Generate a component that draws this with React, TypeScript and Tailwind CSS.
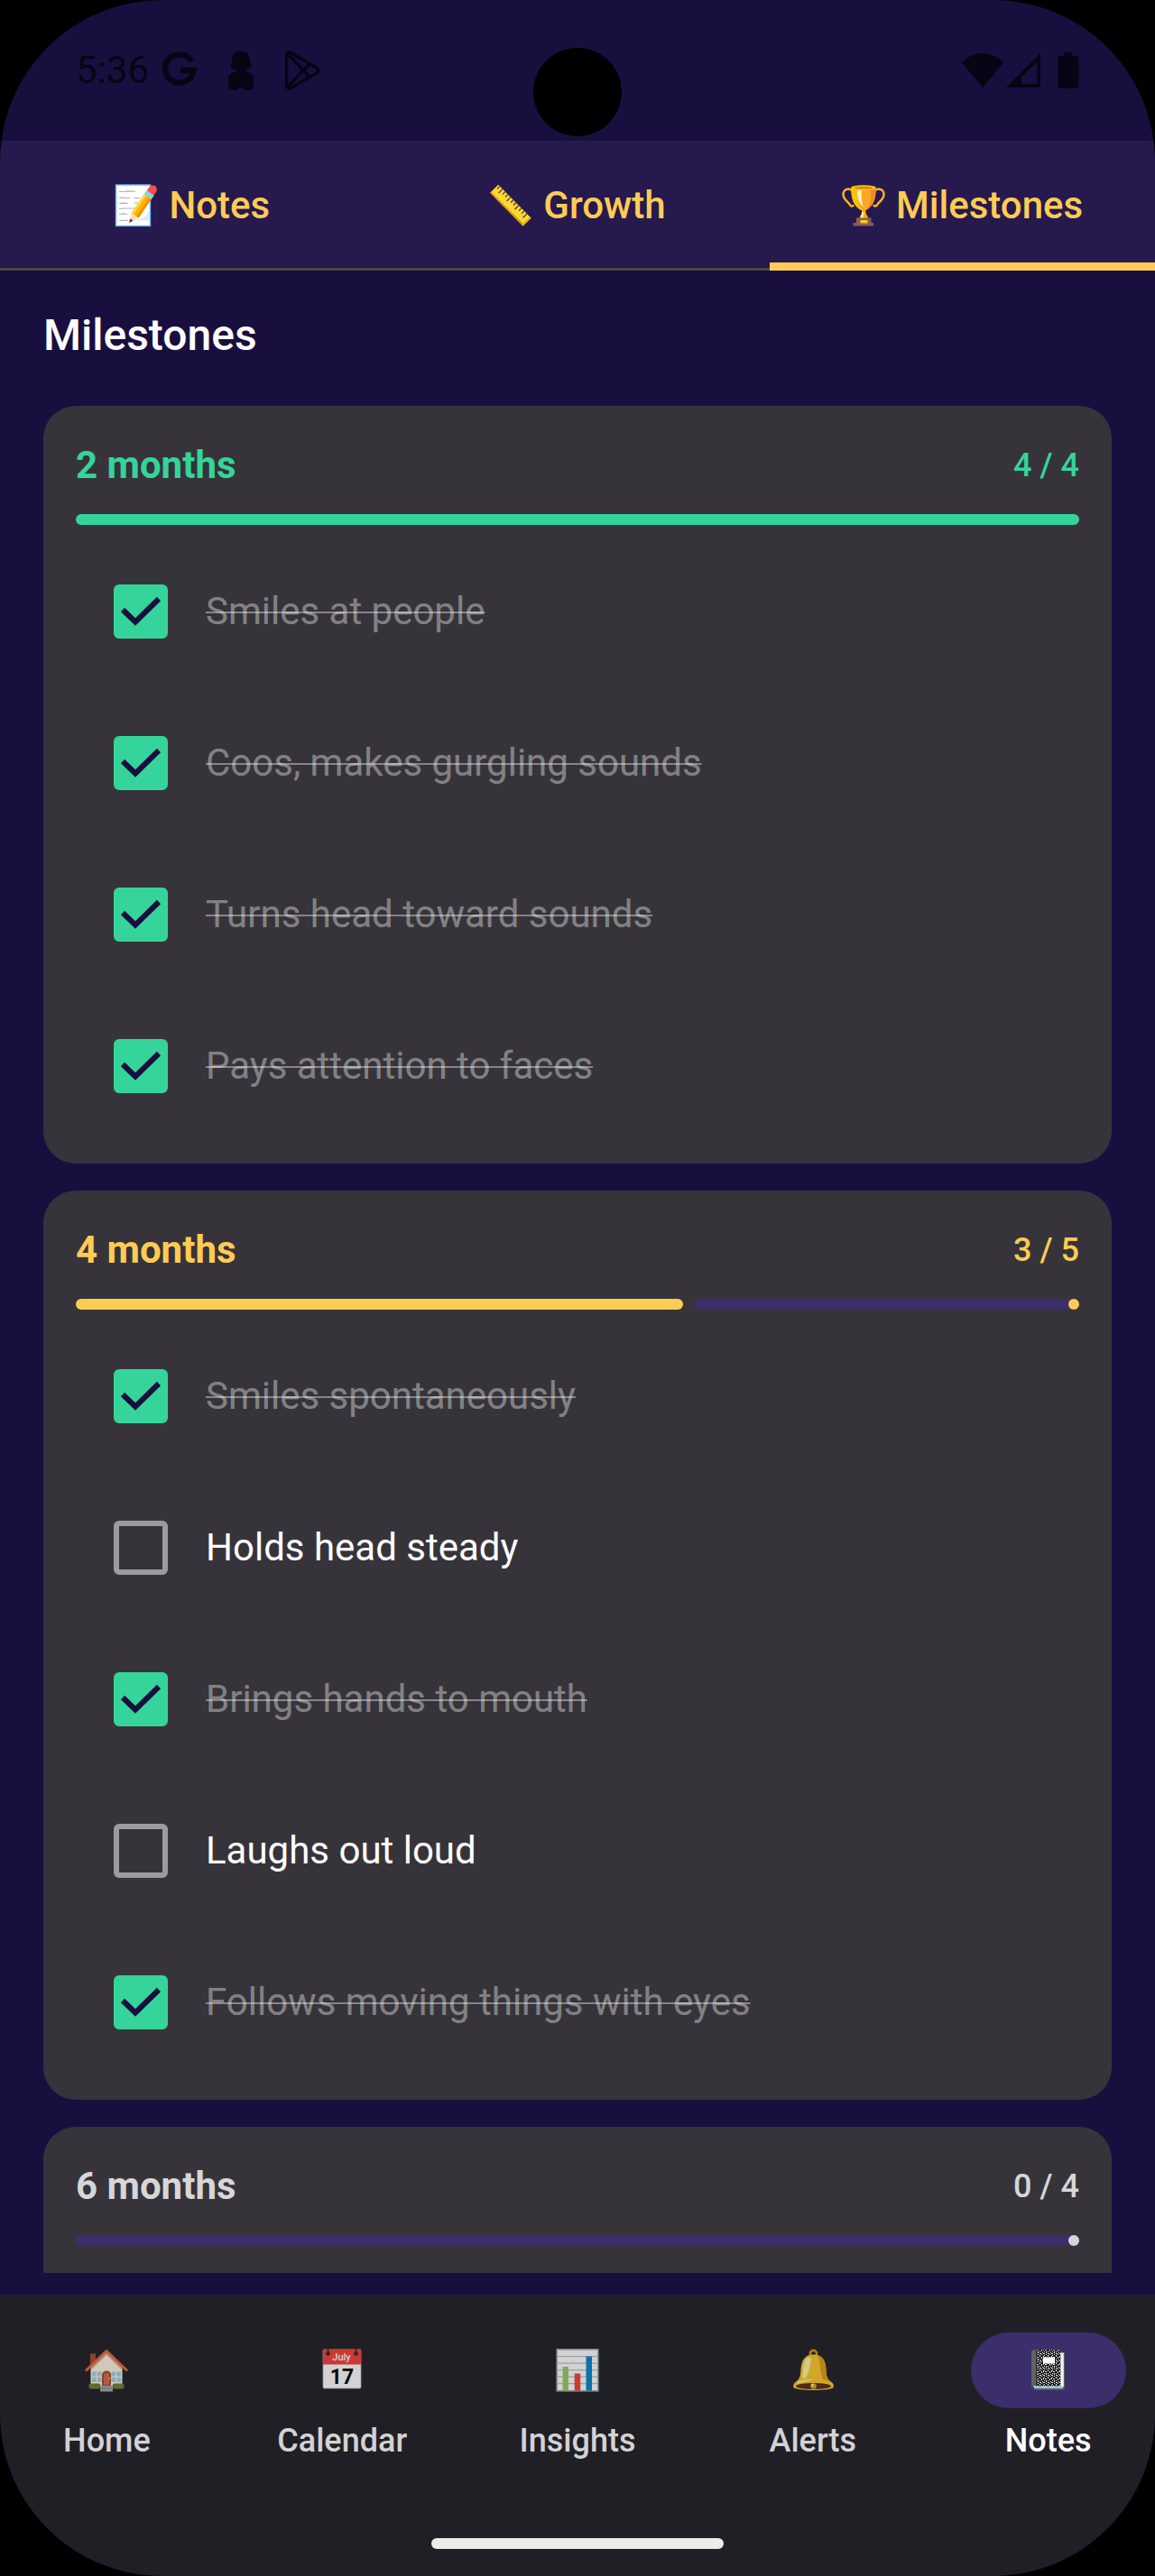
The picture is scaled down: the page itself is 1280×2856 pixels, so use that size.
import React, { useState } from "react";
import clsx from "clsx";

type Milestone = { label: string; done: boolean };
type Group = { title: string; total: number; items: Milestone[] };

const initialGroups: Group[] = [
  {
    title: "2 months",
    total: 4,
    items: [
      { label: "Smiles at people", done: true },
      { label: "Coos, makes gurgling sounds", done: true },
      { label: "Turns head toward sounds", done: true },
      { label: "Pays attention to faces", done: true },
    ],
  },
  {
    title: "4 months",
    total: 5,
    items: [
      { label: "Smiles spontaneously", done: true },
      { label: "Holds head steady", done: false },
      { label: "Brings hands to mouth", done: true },
      { label: "Laughs out loud", done: false },
      { label: "Follows moving things with eyes", done: true },
    ],
  },
  { title: "6 months", total: 4, items: [] },
];

const MemoIcon = () => (
  <svg viewBox="0 0 48 48" className="size-12">
    <rect x="1.5" y="1" width="38" height="45.5" fill="#fff" stroke="#6db8ea" strokeWidth="1.4" />
    <path d="M39 24c0 9-5 14-17 17l17-1z" fill="#d6ebf8" />
    <path
      d="M5 8.5h7l2-.6 9 .3M5 15.5l4-.5 4 .8 4-.6M22 15.5h6M5 21.5l5-.4 5 .4M22 21h4M5 27.5l8-.5h12M5 33.5l5-.6 4 .6M5 40.5h6l4-.5"
      fill="none"
      stroke="#a3b3bb"
      strokeWidth="1.1"
    />
    <path d="M41.8 6.6 39.5 10" stroke="#ef5350" strokeWidth="9.5" />
    <circle cx="42.3" cy="6" r="4.6" fill="#ef5350" />
    <path d="m39.6 9.8-3.3 4.8" stroke="#8fd0e0" strokeWidth="10" />
    <path d="M36.6 14.2 22.5 35" stroke="#ffb300" strokeWidth="9.5" />
    <path d="M33.8 12.3 19.8 33" stroke="#ffd54f" strokeWidth="2.6" />
    <path d="M39.3 16.2 25.5 36.6" stroke="#f28c00" strokeWidth="2.8" />
    <path d="m18.5 32.3 8 5.4-10.2 4.9z" fill="#ffe0a3" />
    <path d="m17.2 38.3 3.4 2.4-4.6 2.3z" fill="#4a4a4a" />
  </svg>
);

const RulerIcon = () => (
  <svg viewBox="0 0 48 48" className="size-12">
    <path d="m10.3.8-9.2 9L37.5 46.6l9.1-8.8z" fill="#fdd835" />
    <path d="M1.1 9.8 37.5 46.6l1.4-1.5L2.3 8.7z" fill="#d99a00" />
    <path d="m37.5 46.6 9.1-8.8-1.4-1.3-8.9 8.8z" fill="#e8ac10" />
    <path
      d="m12 2.5-3 3m6 0-4.5 4.5M18 8.5l-3 3m6 0-3 3m6 0-4.5 4.5M27 17.6l-3 3m6 0-3 3m6 0-4.5 4.5M36 26.8l-3 3m6 0-3 3m6.2 0-4.7 4.7"
      fill="none"
      stroke="#6d4c2a"
      strokeWidth="1.5"
    />
  </svg>
);

const TrophyIcon = () => (
  <svg viewBox="0 0 48 48" className="size-12">
    <path
      d="M12 8C8 3.5 1.5 5.5 1.5 11.5S7 19.5 8.5 22.5c1 2 2.5 2.5 4 1.5M36 8c4-4.5 10.5-2.5 10.5 3.5S41 19.5 39.5 22.5c-1 2-2.5 2.5-4 1.5"
      fill="none"
      stroke="#ffb81c"
      strokeWidth="2.4"
      strokeLinecap="round"
    />
    <path d="M10.5 3.5h27c.8 12-2.5 20.5-10.5 25.5h-6C13 24 9.7 15.5 10.5 3.5z" fill="#ffa726" />
    <path d="M10.5 4H17c-.8 10 .5 18.500 5 25h-1C13 24 9.700 16 10.500 4z" fill="#ffc107" />
    <path d="M17 6.5h5c-.8 7 0 13 1.5 18.5-4.8-4-6.800-10-6.500-18.500z" fill="#fff3b0" />
    <path d="M32 6h5.5c.2 11-3 18.5-9.5 22 3.5-6 4.5-13 4-22z" fill="#f28c1a" />
    <ellipse cx="24" cy="3.8" rx="13.5" ry="2.6" fill="#ffc928" />
    <ellipse cx="24" cy="4.2" rx="10.5" ry="1.4" fill="#d98500" />
    <path d="M22 28h4l.8 5 3 5.5h-11l3-5.5z" fill="#ffb300" />
    <path d="M22.5 31H24l-.5 7h-3z" fill="#fff3b0" />
    <path d="M16 37.5h16.500V43H35v3.500H12.500V43H16z" fill="#8d5f4c" />
    <rect x="20.5" y="40" width="8" height="3.5" fill="#ffc928" />
  </svg>
);

const HouseIcon = () => (
  <svg viewBox="0 0 48 48" className="size-12">
    <rect x="6" y="5.5" width="6" height="15" fill="#a1512a" />
    <path d="M6.5 22.5 24 5l17.5 17.5V43h-35z" fill="#fff3e0" />
    <path d="M8 22.5 24 7l16 15.5 1.5 1V20L24 3 6.5 20v3z" fill="#c9b09c" />
    <path d="m1 24.5 23-22 23 22" fill="none" stroke="#f4662d" strokeWidth="2.8" />
    <path d="M8 25.5h10.5V37H8zM29.5 25.5H40V37H29.500z" fill="#9fd5df" />
    <path d="M13.2 25v12.5M8 31.2h10.5M34.8 25v12.5M29.5 31.2H40" stroke="#fff3e0" strokeWidth="1.2" />
    <path d="M19 41V29c0-6 10-6 10 0v12z" fill="#a8482c" />
    <path d="M21 40V29c0-3.5 6-3.5 6 0v11z" fill="#cf6f50" />
    <circle cx="27.5" cy="33" r="1" fill="#fdd835" />
    <rect x="4.5" y="38.5" width="13" height="6" rx="2.5" fill="#727f32" />
    <rect x="30.5" y="38.5" width="13" height="6" rx="2.5" fill="#727f32" />
    <path d="M17 41h14v6.5H17z" fill="#a5a8aa" />
    <path d="M17 43.8h14" stroke="#83878a" strokeWidth="1" />
  </svg>
);

const CalendarIcon = () => (
  <svg viewBox="0 0 48 48" className="size-12">
    <rect x="3" y="1" width="42" height="43" rx="1.5" fill="#fff" stroke="#b0b0b5" strokeWidth=".8" />
    <path d="M3 1.5Q3 .5 4 .5h40q1 0 1 1v16H3z" fill="#f44336" />
    <path d="M8.5 0v5M39.5 0v5" stroke="#3b2523" strokeWidth="1.8" />
    <circle cx="8.5" cy="5.5" r="2.3" fill="#3b2523" />
    <circle cx="39.5" cy="5.5" r="2.3" fill="#3b2523" />
    <text x="23.5" y="13" textAnchor="middle" fontSize="11" fontWeight="500" fill="#fff">
      July
    </text>
    <text x="24" y="39" textAnchor="middle" fontSize="23" fontWeight="700" fill="#000">
      17
    </text>
  </svg>
);

const ChartIcon = () => (
  <svg viewBox="0 0 48 48" className="size-12">
    <rect x="1.2" y=".8" width="45.6" height="46" fill="#fff" stroke="#9eabb2" strokeWidth="1.6" />
    <path d="M1 8.7h46M1 16.2h46M1 23.7h46M1 31.2h46M1 38.7h46" stroke="#b9bfc4" strokeWidth="1.2" />
    <path d="M7.5 20H14v26.5H7.5z" fill="#9ccc65" />
    <path d="M20.7 27.5h6.5v19h-6.5z" fill="#f44336" />
    <path d="M33.5 8.5H40v38h-6.5z" fill="#0288d1" />
  </svg>
);

const BellIcon = () => (
  <svg viewBox="0 0 48 48" className="size-12">
    <circle cx="24.5" cy="5.5" r="3.6" fill="none" stroke="#d6960f" strokeWidth="2.6" />
    <path d="M24.5 6.5c9.5 0 13.5 6 14 17 .4 9 2 10.5 6 13.5 2 1.5 3 4 2 6-3 4-40.5 4-44 0-1-2 0-4.5 2-6 4-3 5.4-4.5 6-13.5.7-11 4.5-17 14-17z" fill="#fdca2a" />
    <path d="M29 7.5c7 1.5 9.2 8 9.5 16 .3 8 1.5 10.5 5 13l-8-2C31 27 33 14 29 7.5z" fill="#e09f12" />
    <path d="M18 10c3.5-1 4.5 0 3.8 3-1 5-2 13-5.5 18.5-1.5 2-4.5 2-4-1C13.5 24 12.5 13 18 10z" fill="#fff59d" />
    <path d="M9 36c6-2 12-2 16-1.5-6 1-12 2-18 4-1.5 0-.5-1.5 2-2.5z" fill="#fff59d" />
    <ellipse cx="24.5" cy="41.5" rx="19.5" ry="3.6" fill="#5d2f16" />
    <circle cx="24.5" cy="41.5" r="3.3" fill="#e0a21b" />
    <circle cx="23.5" cy="40.5" r="1.4" fill="#fff3a0" />
  </svg>
);

const NotebookIcon = () => (
  <svg viewBox="0 0 48 48" className="size-12">
    <defs>
      <pattern id="speckle" width="9" height="8" patternUnits="userSpaceOnUse">
        <rect width="9" height="8" fill="#1c1c1c" />
        <path
          d="M0 0h1v2H0zM2 1h2v1H2zM5 0h1v1H5zM7 1h1v2H7zM1 3h1v1H1zM3 3h1v2H3zM5 3h1v1H5zM8 4h1v1H8zM0 5h2v1H0zM5 5h2v1H5zM3 6h1v1H3zM7 6h1v1H7zM1 7h1v1H1zM5 7h1v1H5z"
          fill="#ececec"
        />
      </pattern>
    </defs>
    <path d="M8 4h34v40q0 2-2 2H8z" fill="#5b5b60" />
    <path d="M37 4.5h3.8V42L37 44z" fill="#f5f5f5" />
    <path d="M7 41h31l2 3H8z" fill="#90cfe0" />
    <path d="M5 3q0-1.5 1.5-1.5H37V41H7l-2 2z" fill="#636363" />
    <path d="M10.5 1.5v40" stroke="#333" strokeWidth="1" />
    <path d="M11.5 1.5h26v40h-26z" fill="url(#speckle)" />
    <rect x="18" y="9.5" width="13" height="7" fill="#fff" />
  </svg>
);

const tabs = [
  { label: "Notes", icon: <MemoIcon /> },
  { label: "Growth", icon: <RulerIcon /> },
  { label: "Milestones", icon: <TrophyIcon /> },
];

const navItems = [
  { label: "Home", icon: <HouseIcon /> },
  { label: "Calendar", icon: <CalendarIcon /> },
  { label: "Insights", icon: <ChartIcon /> },
  { label: "Alerts", icon: <BellIcon /> },
  { label: "Notes", icon: <NotebookIcon /> },
];

const StatusBar = () => {
  return (
    <div className="relative flex h-39 shrink-0 items-start justify-between px-21 pt-13 text-[#070414]">
      <div className="flex items-center">
        <span className="text-[42px] leading-[52px]">5:36</span>
        <svg viewBox="0 0 40 40" className="ml-3.5 size-10">
          <path d="M33.5 10A15.8 15.8 0 1 0 35.5 20H21" fill="none" stroke="currentColor" strokeWidth="6.5" />
        </svg>
        <svg viewBox="0 0 32 44" className="ml-8 h-11 w-8" fill="currentColor">
          <path d="M16 .5c6.5 0 9.500 4 10 9.500.2 3 .5 5 2 7.500-1.500 3-4 3.500-7 4V23c5 1.500 9 3.500 9 7v11c0 2-1.500 3-3.500 3h-5c-1.500 0-2.500-.8-3-2-.5-1.300-4.500-1.300-5 0-.5 1.200-1.500 2-3 2h-5C3.500 44 2 43 2 41V30c0-3.500 4-5.500 9-7v-1.500c-3-.5-5.500-1-7-4 1.500-2.500 1.800-4.500 2-7.500C6.500 4.500 9.500.5 16 .5z" />
        </svg>
        <svg viewBox="0 0 40 44" className="ml-8 h-11 w-10" fill="none" stroke="currentColor" strokeWidth="3.5" strokeLinejoin="round">
          <path d="M2.5 5.5c0-3 2.5-4.5 5-3L35 18.5c3.5 2 3.5 5 0 7l-27.500 16c-2.500 1.500-5 0-5-3z" />
          <path d="m3.5 3.5 25 26M3.5 40.5l25-26" />
        </svg>
      </div>
      <div className="flex h-13 items-center">
        <svg viewBox="0 0 46 40" className="h-10 w-[46px]" fill="currentColor">
          <path d="M23 39 0 11.5C13-2.5 33-2.500 46 11.500z" />
        </svg>
        <svg viewBox="0 0 40 40" className="ml-0.5 size-10">
          <path fill="currentColor" fillRule="evenodd" d="M39 1v38H1zM35.5 11 18 27.5V35h17.500z" />
        </svg>
        <svg viewBox="0 0 24 40" className="ml-4.5 h-10 w-6" fill="currentColor">
          <path d="M7.500 0h9v4H21q2.500 0 2.500 2.500v31Q23.500 40 21 40H3Q.5 40 .5 37.500v-31Q.5 4 3 4h4.500z" />
        </svg>
      </div>
      {/* camera cutout */}
      <div className="absolute top-[53px] left-1/2 size-[98px] -translate-x-1/2 rounded-full bg-black" />
    </div>
  );
};

const TabBar = () => {
  const [active, setActive] = useState("Milestones");
  return (
    <div role="tablist" className="grid h-36 shrink-0 grid-cols-3 bg-[#26194e]">
      {tabs.map((tab) => (
        <button
          key={tab.label}
          type="button"
          role="tab"
          aria-selected={active === tab.label}
          onClick={() => setActive(tab.label)}
          className="relative flex items-center justify-center gap-3 border-b-3 border-[#49464c] pt-[3px] text-[42px] leading-[60px] font-medium text-[#fecc54]"
        >
          {tab.icon}
          {tab.label}
          {active === tab.label && <span className="absolute inset-x-0 -bottom-[3px] h-[9px] bg-[#fecc54]" />}
        </button>
      ))}
    </div>
  );
};

const Progress = ({ value, total }: { value: number; total: number }) => {
  const full = value === total;
  return (
    <div
      role="progressbar"
      aria-valuenow={value}
      aria-valuemax={total}
      className="mt-6 flex h-3 gap-3"
    >
      {value > 0 && (
        <div
          className={clsx("rounded-full", full ? "bg-[#35d49b]" : "bg-[#fecc54]")}
          style={{ width: full ? "100%" : `calc(${(value / total) * 100}% + 6px)` }}
        />
      )}
      {!full && (
        <div className="flex flex-1 justify-end rounded-full bg-[#3b2e6b]">
          <span className={clsx("size-3 rounded-full", value > 0 ? "bg-[#fecc54]" : "bg-[#d8d5e1]")} />
        </div>
      )}
    </div>
  );
};

const MilestoneRow = ({ item, onToggle }: { item: Milestone; onToggle: () => void }) => {
  return (
    <label className="flex h-36 items-center">
      <span className="mx-[42px] grid">
        <input
          type="checkbox"
          checked={item.done}
          onChange={onToggle}
          className="col-start-1 row-start-1 size-15 appearance-none rounded-md border-6 border-[#9c9b9f] checked:border-[#35d49b] checked:bg-[#35d49b]"
        />
        {item.done && (
          <svg viewBox="0 0 60 60" className="pointer-events-none col-start-1 row-start-1 size-15">
            <path d="m10 28 14 13.5L50 16" fill="none" stroke="#190f3f" strokeWidth="6" />
          </svg>
        )}
      </span>
      <span
        className={clsx(
          "text-[42px] leading-[60px]",
          item.done ? "text-white/40 line-through decoration-2" : "text-white"
        )}
      >
        {item.label}
      </span>
    </label>
  );
};

const MilestoneCard = ({ group, onToggle }: { group: Group; onToggle: (label: string) => void }) => {
  const done = group.items.filter((item) => item.done).length;
  const color =
    done === group.total ? "text-[#35d49b]" : done > 0 ? "text-[#fecc54]" : "text-[#d7d6d8]";
  return (
    <section className="shrink-0 rounded-[36px] bg-[#36343a] p-9">
      <div className={clsx("flex items-center justify-between", color)}>
        <h2 className="text-[42px] leading-[60px] font-bold">{group.title}</h2>
        <span className="text-4xl leading-[48px] font-medium">
          {done} / {group.total}
        </span>
      </div>
      <Progress value={done} total={group.total} />
      <div className="mt-6 flex min-h-36 flex-col gap-6">
        {group.items.map((item) => (
          <MilestoneRow key={item.label} item={item} onToggle={() => onToggle(item.label)} />
        ))}
      </div>
    </section>
  );
};

const BottomNav = () => {
  return (
    <nav className="flex shrink-0 flex-col bg-[#211f26] pt-[42px]">
      <div className="grid grid-cols-5 gap-6">
        {navItems.map((item, i) => {
          const active = i === 4;
          return (
            <button key={item.label} type="button" className="flex flex-col items-center gap-3">
              <span
                className={clsx(
                  "flex h-21 w-43 items-center justify-center rounded-full",
                  active && "bg-[#3b2e6b]"
                )}
              >
                <span className={active ? "opacity-100" : "opacity-80"}>{item.icon}</span>
              </span>
              <span
                className={clsx(
                  "text-4xl leading-[48px] font-medium",
                  active ? "text-white" : "text-[#d3d2d4]"
                )}
              >
                {item.label}
              </span>
            </button>
          );
        })}
      </div>
      <div className="mx-auto mt-21 mb-[30px] h-3 w-81 rounded-full bg-[#ececec]" />
    </nav>
  );
};

const App = () => {
  const [groups, setGroups] = useState(initialGroups);

  const toggle = (title: string, label: string) =>
    setGroups((prev) =>
      prev.map((group) =>
        group.title !== title
          ? group
          : {
              ...group,
              items: group.items.map((item) =>
                item.label === label ? { ...item, done: !item.done } : item
              ),
            }
      )
    );

  return (
    <div className="h-screen bg-black font-['Roboto',sans-serif]">
      <div className="flex h-full flex-col overflow-hidden rounded-[180px] bg-[#190f3f]">
        <StatusBar />
        <TabBar />
        <main className="flex min-h-0 flex-1 flex-col px-12 pt-9 pb-6">
          <h1 className="mb-[42px] text-5xl leading-[72px] font-medium text-white">Milestones</h1>
          <div className="flex min-h-0 flex-1 flex-col gap-[30px] overflow-hidden">
            {groups.map((group) => (
              <MilestoneCard
                key={group.title}
                group={group}
                onToggle={(label) => toggle(group.title, label)}
              />
            ))}
          </div>
        </main>
        <BottomNav />
      </div>
    </div>
  );
};

export default App;
